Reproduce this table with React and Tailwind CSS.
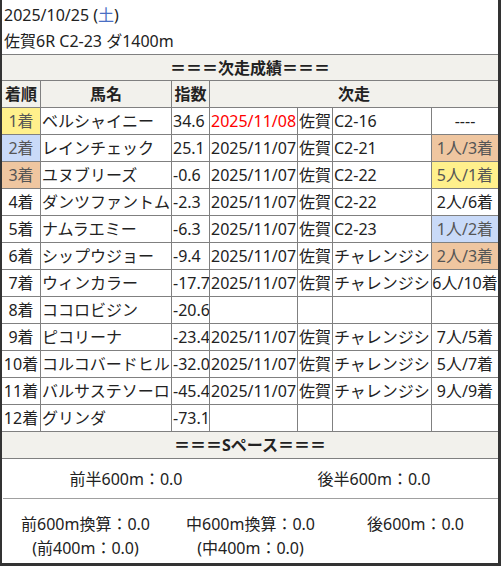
const fills = {
  y: 'bg-[#fff08c] text-[#555]',
  b: 'bg-[#c9daf8] text-[#555]',
  o: 'bg-[#efc6a0] text-[#555]',
  n: 'bg-white',
};

const rows = [
  { rank: '1着', rc: 'y', name: 'ベルシャイニー', idx: '34.6', date: '2025/11/08', red: true, place: '佐賀', race: 'C2-16', res: '----', xc: 'n' },
  { rank: '2着', rc: 'b', name: 'レインチェック', idx: '25.1', date: '2025/11/07', place: '佐賀', race: 'C2-21', res: '1人/3着', xc: 'o' },
  { rank: '3着', rc: 'o', name: 'ユヌブリーズ', idx: '-0.6', date: '2025/11/07', place: '佐賀', race: 'C2-22', res: '5人/1着', xc: 'y' },
  { rank: '4着', rc: 'n', name: 'ダンツファントム', idx: '-2.3', date: '2025/11/07', place: '佐賀', race: 'C2-22', res: '2人/6着', xc: 'n' },
  { rank: '5着', rc: 'n', name: 'ナムラエミー', idx: '-6.3', date: '2025/11/07', place: '佐賀', race: 'C2-23', res: '1人/2着', xc: 'b' },
  { rank: '6着', rc: 'n', name: 'シップウジョー', idx: '-9.4', date: '2025/11/07', place: '佐賀', race: 'チャレンジシ', res: '2人/3着', xc: 'o' },
  { rank: '7着', rc: 'n', name: 'ウィンカラー', idx: '-17.7', date: '2025/11/07', place: '佐賀', race: 'チャレンジシ', res: '6人/10着', xc: 'n' },
  { rank: '8着', rc: 'n', name: 'ココロビジン', idx: '-20.6', date: '', place: '', race: '', res: '', xc: 'n' },
  { rank: '9着', rc: 'n', name: 'ピコリーナ', idx: '-23.4', date: '2025/11/07', place: '佐賀', race: 'チャレンジシ', res: '7人/5着', xc: 'n' },
  { rank: '10着', rc: 'n', name: 'コルコバードヒル', idx: '-32.0', date: '2025/11/07', place: '佐賀', race: 'チャレンジシ', res: '5人/7着', xc: 'n' },
  { rank: '11着', rc: 'n', name: 'バルサステソーロ', idx: '-45.4', date: '2025/11/07', place: '佐賀', race: 'チャレンジシ', res: '9人/9着', xc: 'n' },
  { rank: '12着', rc: 'n', name: 'グリンダ', idx: '-73.1', date: '', place: '', race: '', res: '', xc: 'n' },
];

const cell = 'h-[26px] flex items-center overflow-hidden whitespace-nowrap';

export default function App() {
  return (
    <div
      className="w-[501px] h-[566px] bg-white border-l-2 border-r-[3px] border-b-[3px] border-[#333] flex flex-col text-[16px] text-[#222]"
      style={{ fontFamily: '"Noto Sans", "Noto Sans CJK JP", sans-serif' }}
    >
      {/* Race info */}
      <div className="h-[55px] pl-[2px] pt-[2px] leading-[26px] border-b border-[#808080]">
        <div>
          2025/10/25 (<span className="text-[#4a6fc4]">土</span>)
        </div>
        <div>佐賀6R C2-23 ダ1400m</div>
      </div>

      {/* Next race results */}
      <div className="h-[26px] bg-[#f2f1ec] border-b border-[#808080] flex items-center justify-center font-bold">
        ＝＝＝次走成績＝＝＝
      </div>

      <div className="grid grid-cols-[38px_130px_37px_87px_34px_98px_66px] gap-px bg-[#808080] border-b border-[#808080]">
        <div className={`${cell} justify-center bg-[#f2f1ec] font-bold`}>着順</div>
        <div className={`${cell} justify-center bg-[#f2f1ec] font-bold`}>馬名</div>
        <div className={`${cell} justify-center bg-[#f2f1ec] font-bold`}>指数</div>
        <div className={`${cell} col-span-4 justify-center bg-[#f2f1ec] font-bold`}>次走</div>

        {rows.map((r, i) => (
          <div key={i} className="contents">
            <div className={`${cell} justify-center ${fills[r.rc]}`}>{r.rank}</div>
            <div className={`${cell} px-[1px] bg-white`}>{r.name}</div>
            <div className={`${cell} px-[1px] bg-white`}>{r.idx}</div>
            <div className={`${cell} px-[1px] bg-white ${r.red ? 'text-[#f00]' : ''}`}>{r.date}</div>
            <div className={`${cell} px-[1px] bg-white`}>{r.place}</div>
            <div className={`${cell} px-[1px] bg-white`}>{r.race}</div>
            <div className={`${cell} justify-center ${fills[r.xc]}`}>{r.res}</div>
          </div>
        ))}
      </div>

      {/* S pace */}
      <div className="h-[27px] bg-[#f2f1ec] border-b border-[#808080] flex items-center justify-center font-bold">
        ＝＝＝Sペース＝＝＝
      </div>

      <div className="h-[39px] grid grid-cols-2 items-center text-center">
        <div>前半600m：0.0</div>
        <div>後半600m：0.0</div>
      </div>

      <div className="flex-1 ml-[1px] border-t border-[#a0a0a0] pt-[13px] grid grid-cols-3 content-start text-center leading-[24px]">
        <div>
          <div>前600m換算：0.0</div>
          <div>(前400m：0.0)</div>
        </div>
        <div>
          <div>中600m換算：0.0</div>
          <div>(中400m：0.0)</div>
        </div>
        <div>
          <div>後600m：0.0</div>
        </div>
      </div>
    </div>
  );
}
